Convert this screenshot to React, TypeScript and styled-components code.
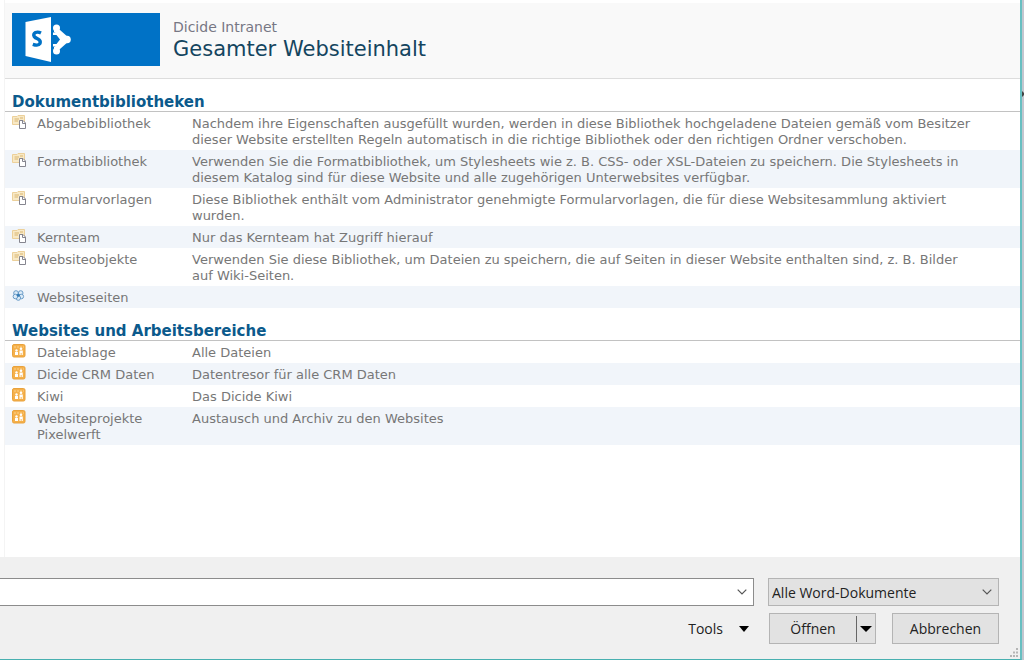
import React from "react";
import styled, { createGlobalStyle } from "styled-components";

const GlobalStyle = createGlobalStyle`
  *, *::before, *::after { box-sizing: border-box; }
  body { margin: 0; background: #c3c6cf; }
`;

const contentFont = `Verdana, "DejaVu Sans", sans-serif`;
const dialogFont = `"Segoe UI", "Open Sans", "Noto Sans", sans-serif`;

const Desktop = styled.div`
  display: grid;
  grid-template-columns: minmax(0, 1fr) 2px;
  min-height: 100vh;
  overflow: hidden;
`;

const Backdrop = styled.div`
  padding-top: 90px;
  background: #c3c6cf;
`;

const BackdropArrow = styled.svg`
  display: block;
`;

const Dialog = styled.div`
  display: flex;
  flex-direction: column;
  background: #fff;
  border-right: 2px solid #68bfc1;
  border-bottom: 1px solid #48b0b0;
`;

const Page = styled.main`
  flex: 1;
  margin-left: 4px;
  padding-top: 3px;
  border-left: 1px solid #f4f4f4;
  font-family: ${contentFont};
`;

const SiteHeader = styled.header`
  display: flex;
  gap: 13px;
  padding: 10px 7px 12px;
  background: #f9f9f9;
  border-bottom: 1px solid #dddddd;
`;

const Logo = styled.div`
  width: 148px;
  height: 53px;
  background: #0072c6;
`;

const Titles = styled.div`
  padding-top: 6px;
`;

const SiteName = styled.p`
  margin: 0;
  font-size: 14px;
  line-height: 16px;
  color: #777784;
`;

const Title = styled.h1`
  margin: 0;
  font-size: 21px;
  line-height: 28px;
  font-weight: 400;
  color: #14455f;
`;

const Section = styled.section`
  padding-top: 14px;
`;

const SectionTitle = styled.h2`
  margin: 0;
  padding: 0 7px;
  font-size: 15px;
  line-height: 18px;
  font-weight: 700;
  color: #0b5a8c;
  border-bottom: 1px solid #c2c2c2;
`;

const List = styled.table`
  width: 100%;
  table-layout: fixed;
  border-collapse: collapse;
  color: #777777;
  font-size: 13px;
  line-height: 16px;
`;

const Row = styled.tr`
  &:nth-child(even) { background: #f1f5fa; }
`;

const IconCell = styled.td`
  width: 32px;
  padding: 3px 0 0 7px;
  vertical-align: top;
`;

const NameCell = styled.th`
  width: 155px;
  padding: 4px 8px 2px 0;
  text-align: left;
  font-weight: 400;
  vertical-align: top;
`;

const TextCell = styled.td`
  padding: 4px 44px 2px 0;
  vertical-align: top;
`;

const Glyph = styled.svg`
  display: block;
`;

const Footer = styled.form`
  position: relative;
  display: grid;
  grid-template-columns: minmax(0, 1fr) 231px;
  column-gap: 14px;
  row-gap: 7px;
  padding: 21px 21px 15px 0;
  background: #f0f0f0;
  font-family: ${dialogFont};
  font-size: 14px;
  color: #222;
`;

const Field = styled.div<{ $filled?: boolean }>`
  display: grid;
  grid-template-columns: minmax(0, 1fr) 22px;
  align-items: center;
  height: 28px;
  border: 1px solid ${(p) => (p.$filled ? "#b4b4b4" : "#8c8c8c")};
  border-left-width: ${(p) => (p.$filled ? "1px" : "0")};
  background: ${(p) => (p.$filled ? "#e2e2e2" : "#fff")};
`;

const FileInput = styled.input`
  width: 100%;
  height: 26px;
  border: 0;
  outline: 0;
  background: transparent;
  font: inherit;
`;

const TypeSelect = styled.select`
  grid-area: 1 / 1 / 2 / 3;
  width: 100%;
  height: 26px;
  padding: 0 24px 0 3px;
  border: 0;
  appearance: none;
  background: transparent;
  color: inherit;
  font: inherit;
`;

const PlainButton = styled.button`
  display: flex;
  align-items: center;
  justify-content: center;
  height: 26px;
  padding: 0;
  border: 0;
  background: transparent;
  color: inherit;
  font: inherit;
`;

const Indicator = styled.span`
  grid-area: 1 / 2;
  display: flex;
  justify-content: center;
  pointer-events: none;
`;

const ToolsArea = styled.div`
  display: flex;
  align-items: center;
  justify-content: flex-end;
  padding-right: 5px;
`;

const ToolsButton = styled(PlainButton)`
  gap: 16px;
`;

const Actions = styled.div`
  display: flex;
  justify-content: space-between;
  padding-left: 1px;
`;

const ButtonBox = styled.div`
  display: flex;
  align-items: center;
  width: 107px;
  height: 31px;
  border: 1px solid #b4b4b4;
  background: #e2e2e2;
`;

const WideButton = styled(PlainButton)`
  flex: 1;
`;

const SplitButton = styled(PlainButton)`
  width: 19px;
  border-left: 1px solid #666;
`;

const Grip = styled.svg`
  position: absolute;
  right: 1px;
  bottom: 1px;
`;

function SharePointMark() {
  return (
    <svg width="60" height="53" viewBox="0 0 60 53" role="img" aria-label="SharePoint">
      <path d="M42 14 L48 17 L57 25 V28 L48 36 L42 39 V34 L47 31 L51 26.500 L47 22 L42 19Z" fill="#fff" />
      <circle cx="44.500" cy="15" r="3.500" fill="#fff" />
      <circle cx="55" cy="26.500" r="3.800" fill="#fff" />
      <circle cx="44.500" cy="38" r="3.500" fill="#fff" />
      <path d="M41 19.500 H47 L51 25 V28 L47 33.500 H41 V31 H44.500 L48 26.500 L44.500 22 H41Z" fill="#fff" />
      <path d="M13.500 9 L39 4 V49 L13.500 43Z" fill="#fff" />
      <path d="M29 20 Q26 18.500 23.500 19.500 Q20.800 21 22.200 23.500 Q23 24.800 26 26 Q29 27.600 28 30.500 Q26.500 33.200 20.800 31.300" fill="none" stroke="#0072c6" strokeWidth="3.400" />
    </svg>
  );
}

function LibraryIcon() {
  return (
    <Glyph width="15" height="15" viewBox="0 0 15 15" aria-hidden="true">
      <path d="M.5 1.500H5L6 .5H12.500V9.500H.5Z" fill="#f8e9c6" stroke="#ecd09a" />
      <path d="M2.500 4H7M2.500 6H6M8 3H11" stroke="#d9b570" />
      <path d="M7.500 5.500H11L13.500 8V13.500H7.500Z" fill="#fff" stroke="#85858f" />
      <path d="M10.500 5.500V8.500H13.500" fill="none" stroke="#85858f" />
    </Glyph>
  );
}

function PagesIcon() {
  return (
    <Glyph width="14" height="14" viewBox="0 0 14 14" aria-hidden="true">
      <g fill="#dcebf7" stroke="#6a9cc8">
        <circle cx="4" cy="4" r="2.300" />
        <circle cx="8.700" cy="4" r="2.300" />
        <circle cx="9.300" cy="7.500" r="2.300" />
        <circle cx="6.300" cy="9" r="2.300" />
        <circle cx="3.400" cy="7.500" r="2.300" />
      </g>
      <circle cx="6.300" cy="6.200" r="1.500" fill="#347bb5" />
    </Glyph>
  );
}

function SiteIcon() {
  return (
    <Glyph width="14" height="14" viewBox="0 0 14 14" aria-hidden="true">
      <rect x=".5" y=".5" width="12.500" height="12.500" rx="1.500" fill="#f5b04a" stroke="#e9a23c" />
      <path d="M2 3H12" stroke="#fbd28d" strokeDasharray="2 1" />
      <g fill="#fff">
        <circle cx="4.500" cy="6.500" r="1.200" />
        <circle cx="9" cy="4.700" r="1.300" />
        <path d="M3 8H6V11H3ZM7.500 6.500H10.800V11H9.600V9H8.700V11H7.500Z" />
      </g>
    </Glyph>
  );
}

function Chevron() {
  return (
    <svg width="10" height="6" viewBox="0 0 10 6" aria-hidden="true">
      <path d="M.7 .7L5 5L9.300 .7" fill="none" stroke="#555" strokeWidth="1.200" />
    </svg>
  );
}

function Caret({ width = 10 }: { width?: number }) {
  return (
    <svg width={width} height="6" viewBox="0 0 10 6" preserveAspectRatio="none" aria-hidden="true">
      <path d="M0 0H10L5 6Z" fill="#000" />
    </svg>
  );
}

const icons = { library: LibraryIcon, pages: PagesIcon, site: SiteIcon };

type Entry = { icon: keyof typeof icons; name: string; text: string };

const libraries: Entry[] = [
  { icon: "library", name: "Abgabebibliothek", text: "Nachdem ihre Eigenschaften ausgefüllt wurden, werden in diese Bibliothek hochgeladene Dateien gemäß vom Besitzer dieser Website erstellten Regeln automatisch in die richtige Bibliothek oder den richtigen Ordner verschoben." },
  { icon: "library", name: "Formatbibliothek", text: "Verwenden Sie die Formatbibliothek, um Stylesheets wie z. B. CSS- oder XSL-Dateien zu speichern. Die Stylesheets in diesem Katalog sind für diese Website und alle zugehörigen Unterwebsites verfügbar." },
  { icon: "library", name: "Formularvorlagen", text: "Diese Bibliothek enthält vom Administrator genehmigte Formularvorlagen, die für diese Websitesammlung aktiviert wurden." },
  { icon: "library", name: "Kernteam", text: "Nur das Kernteam hat Zugriff hierauf" },
  { icon: "library", name: "Websiteobjekte", text: "Verwenden Sie diese Bibliothek, um Dateien zu speichern, die auf Seiten in dieser Website enthalten sind, z. B. Bilder auf Wiki-Seiten." },
  { icon: "pages", name: "Websiteseiten", text: "" },
];

const sites: Entry[] = [
  { icon: "site", name: "Dateiablage", text: "Alle Dateien" },
  { icon: "site", name: "Dicide CRM Daten", text: "Datentresor für alle CRM Daten" },
  { icon: "site", name: "Kiwi", text: "Das Dicide Kiwi" },
  { icon: "site", name: "Websiteprojekte Pixelwerft", text: "Austausch und Archiv zu den Websites" },
];

function EntrySection({ id, title, entries }: { id: string; title: string; entries: Entry[] }) {
  return (
    <Section>
      <SectionTitle id={id}>{title}</SectionTitle>
      <List aria-labelledby={id}>
        <tbody>
          {entries.map((entry) => {
            const Icon = icons[entry.icon];
            return (
              <Row key={entry.name}>
                <IconCell><Icon /></IconCell>
                <NameCell scope="row">{entry.name}</NameCell>
                <TextCell>{entry.text}</TextCell>
              </Row>
            );
          })}
        </tbody>
      </List>
    </Section>
  );
}

export default function App() {
  return (
    <Desktop>
      <GlobalStyle />
      <Dialog>
        <Page>
          <SiteHeader>
            <Logo><SharePointMark /></Logo>
            <Titles>
              <SiteName>Dicide Intranet</SiteName>
              <Title>Gesamter Websiteinhalt</Title>
            </Titles>
          </SiteHeader>
          <EntrySection id="libraries" title="Dokumentbibliotheken" entries={libraries} />
          <EntrySection id="sites" title="Websites und Arbeitsbereiche" entries={sites} />
        </Page>
        <Footer onSubmit={(e) => e.preventDefault()}>
          <Field>
            <FileInput type="text" aria-label="Dateiname" />
            <PlainButton type="button" aria-label="Dateinamen anzeigen"><Chevron /></PlainButton>
          </Field>
          <Field $filled>
            <TypeSelect aria-label="Dateityp">
              <option>Alle Word-Dokumente</option>
            </TypeSelect>
            <Indicator><Chevron /></Indicator>
          </Field>
          <ToolsArea>
            <ToolsButton type="button">Tools<Caret /></ToolsButton>
          </ToolsArea>
          <Actions>
            <ButtonBox>
              <WideButton type="submit">Öffnen</WideButton>
              <SplitButton type="button" aria-label="Weitere Optionen"><Caret width={12} /></SplitButton>
            </ButtonBox>
            <ButtonBox>
              <WideButton type="button">Abbrechen</WideButton>
            </ButtonBox>
          </Actions>
          <Grip width="10" height="10" viewBox="0 0 10 10" aria-hidden="true">
            <path d="M7 0H9V2H7ZM4 3.500H6V5.500H4ZM7 3.500H9V5.500H7ZM1 7H3V9H1ZM4 7H6V9H4ZM7 7H9V9H7Z" fill="#b5b5b5" />
          </Grip>
        </Footer>
      </Dialog>
      <Backdrop>
        <BackdropArrow width="2" height="8" viewBox="0 0 2 8" aria-hidden="true">
          <path d="M0 1L2 3V5L0 7Z" fill="#444" />
        </BackdropArrow>
      </Backdrop>
    </Desktop>
  );
}
